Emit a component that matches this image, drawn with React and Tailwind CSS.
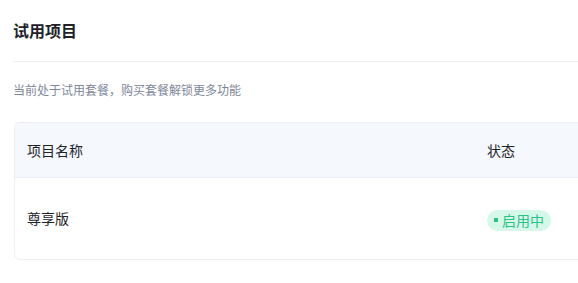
import React from "react";

const App = () => {
  return (
    <div
      className="w-[578px] h-[283px] overflow-hidden bg-white"
      style={{ fontFamily: '"Noto Sans CJK SC", "Noto Sans", sans-serif' }}
    >
      <div className="w-[660px] pl-[13px]">
        <div className="pt-[18px] pb-[19px] border-b border-[#eceef2]">
          <h1 className="text-[16px] leading-[24px] font-bold text-[#1f2329]">
            试用项目
          </h1>
        </div>

        <p className="mt-[19px] text-[12px] leading-[18px] text-[#7e879a]">
          当前处于试用套餐，购买套餐解锁更多功能
        </p>

        <div className="mt-[23px] ml-px border border-[#ebeef5] rounded-[6px] overflow-hidden">
          <div className="grid grid-cols-[460px_1fr] h-[55px] items-center bg-[#f5f8fc] border-b border-[#ebeef5] text-[14px] text-[#1f2329]">
            <div className="pl-[12px]">项目名称</div>
            <div className="pl-[12px]">状态</div>
          </div>
          <div className="grid grid-cols-[460px_1fr] h-[81px] items-center text-[14px] text-[#1f2329]">
            <div className="pl-[12px]">尊享版</div>
            <div className="pl-[12px]">
              <span className="inline-flex items-center h-[21px] px-[7px] rounded-full bg-[#d6f8e9] text-[#2cc08a] text-[14px] leading-none">
                <span className="w-[4px] h-[4px] bg-[#2cc08a] mr-[4px]"></span>
                启用中
              </span>
            </div>
          </div>
        </div>
      </div>
    </div>
  );
};

export default App;
